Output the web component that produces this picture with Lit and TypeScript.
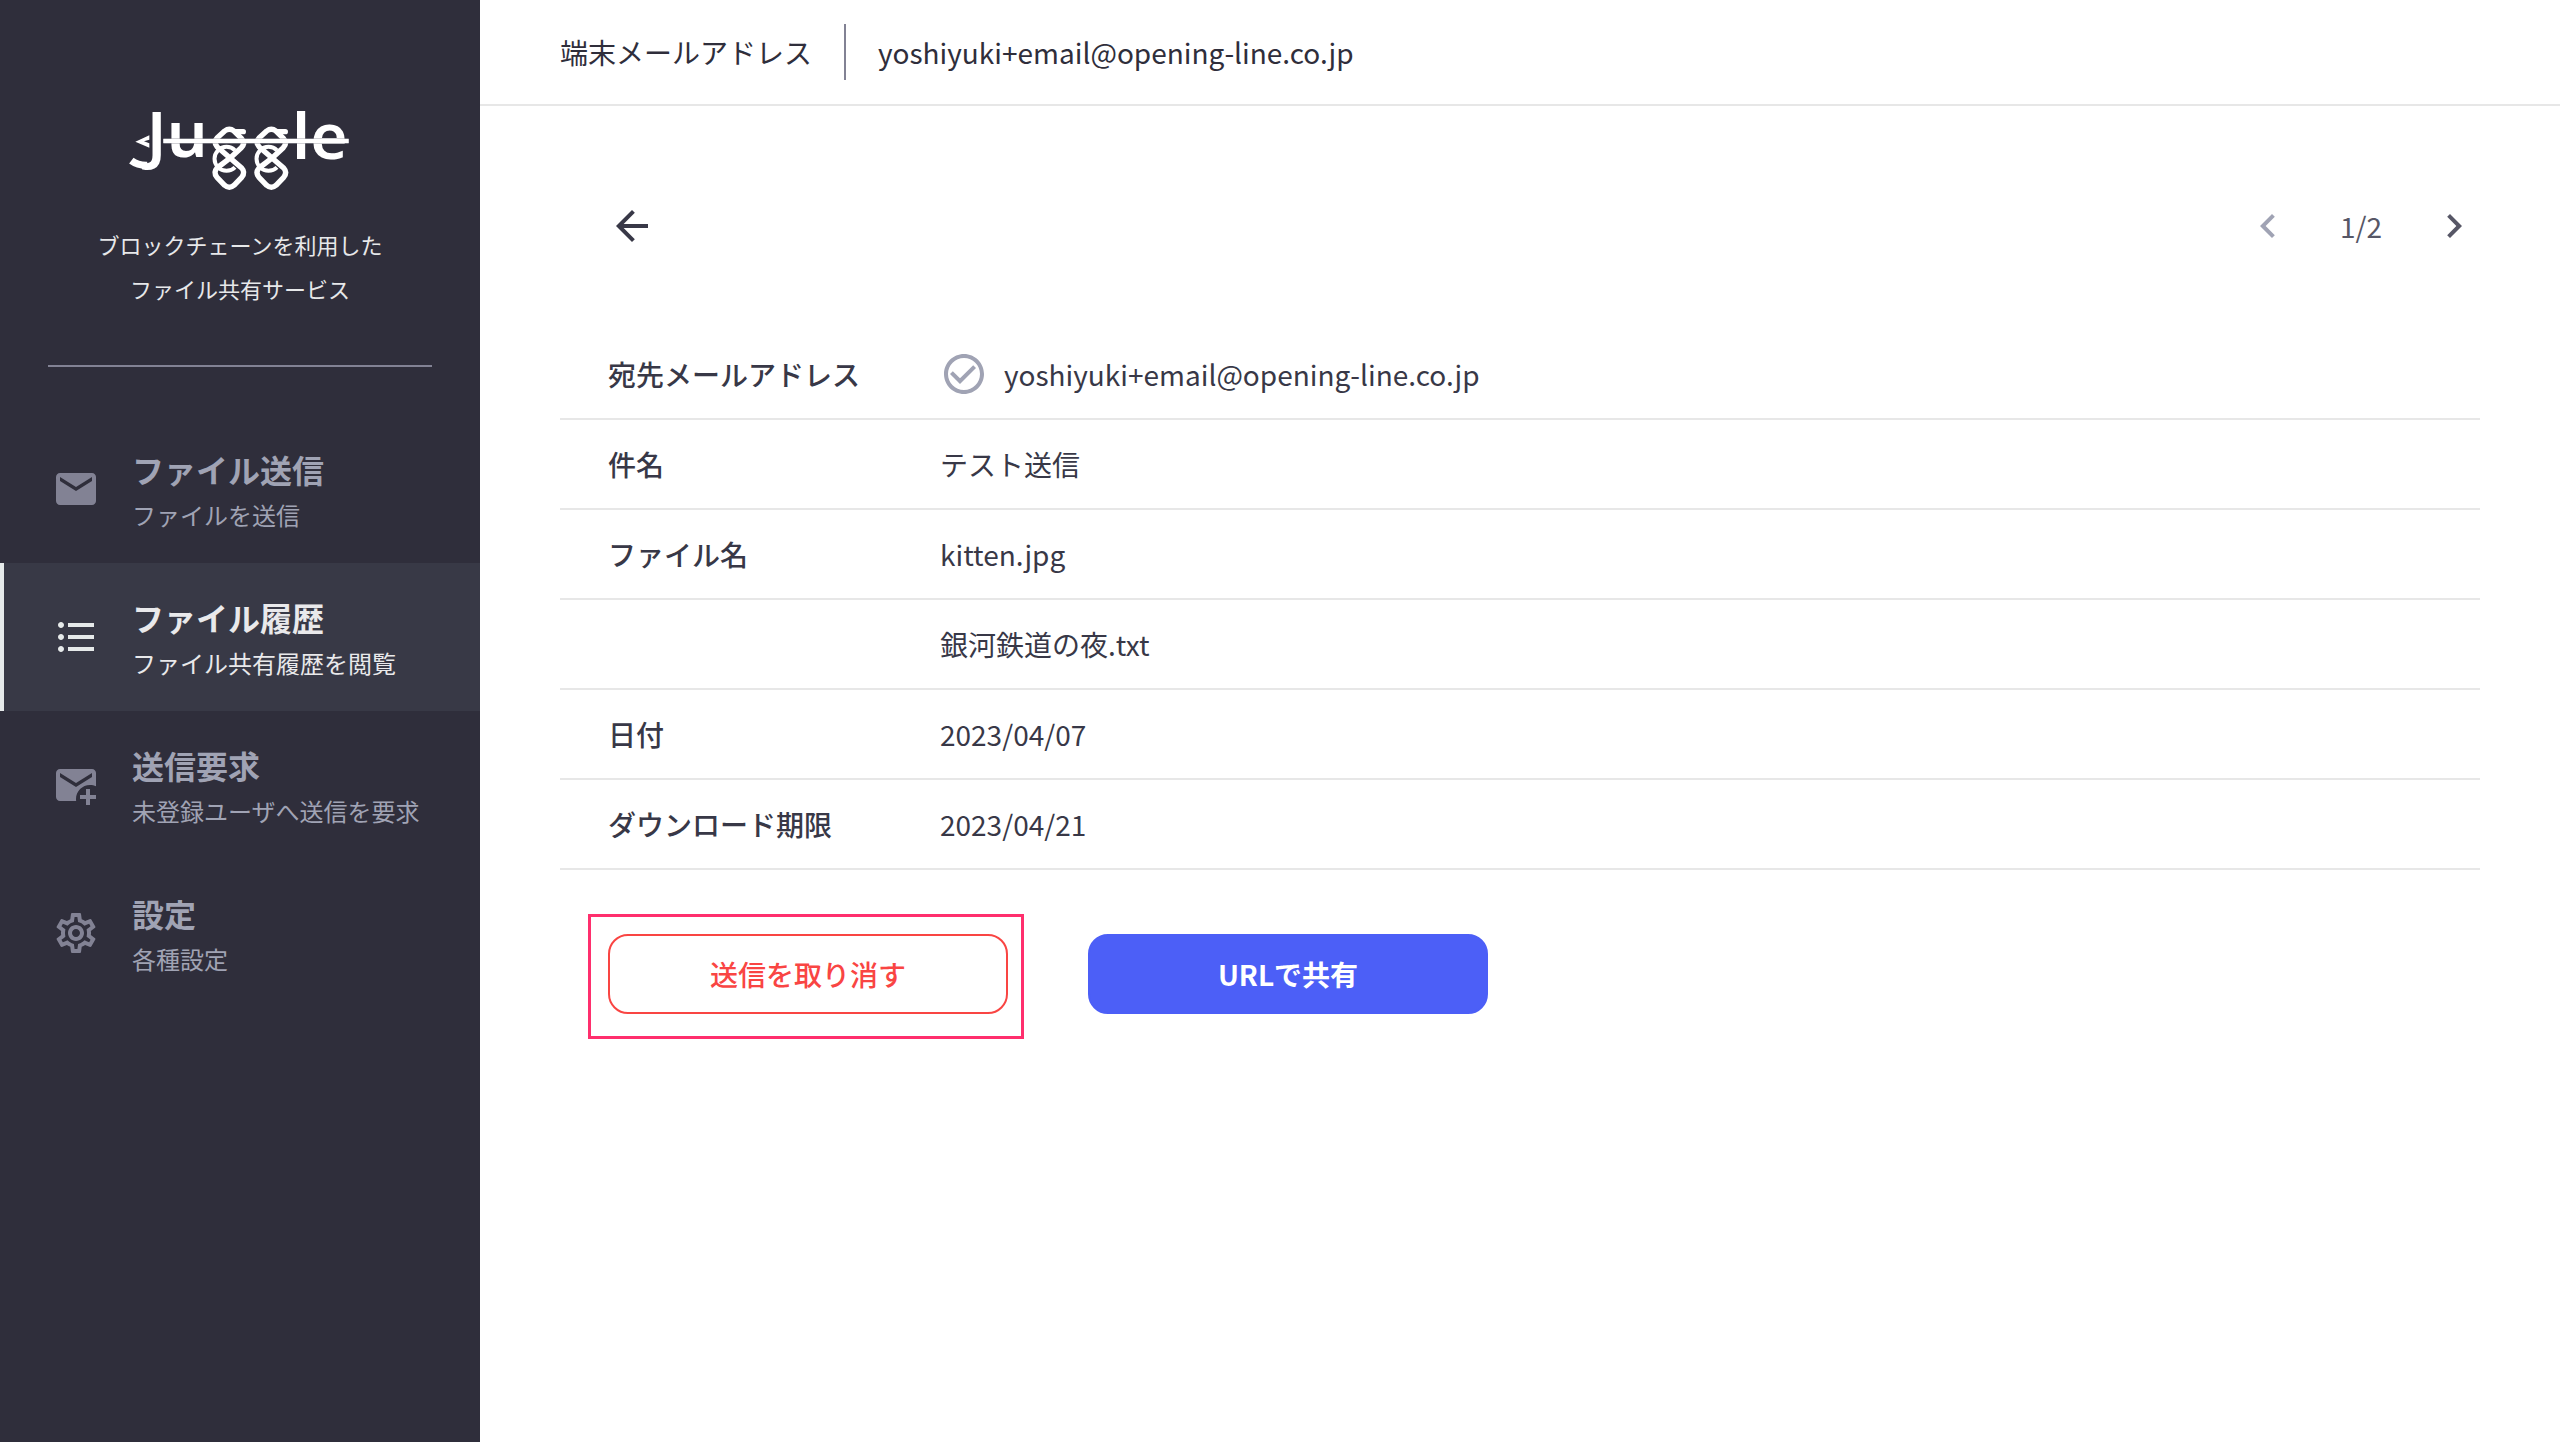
import { LitElement, html, css, svg } from "lit";
import { customElement, state } from "lit/decorators.js";
import { classMap } from "lit/directives/class-map.js";

interface NavItem {
  title: string;
  note: string;
  icon: string;
}

const ICONS: Record<string, string> = {
  mail: "M20 4H4c-1.1 0-1.99.9-1.99 2L2 18c0 1.1.9 2 2 2h16c1.1 0 2-.9 2-2V6c0-1.1-.9-2-2-2zm0 4l-8 5-8-5V6l8 5 8-5v2z",
  list: "M4.500 10.500c-.830 0-1.500.670-1.500 1.500s.670 1.500 1.500 1.500 1.500-.670 1.500-1.500-.670-1.500-1.500-1.500zm0-6c-.830 0-1.500.670-1.500 1.500S3.670 7.500 4.500 7.500 6 6.830 6 6 5.330 4.500 4.500 4.500zm0 12c-.830 0-1.500.680-1.500 1.500s.680 1.500 1.500 1.500 1.500-.680 1.500-1.500-.670-1.500-1.500-1.500zM8 19h13v-2H8v2zm0-6h13v-2H8v2zm0-8v2h13V5H8z",
  invite: "M12 19c0-3.870 3.130-7 7-7 1.080 0 2.090.250 3 .680V6c0-1.100-.900-2-2-2H4c-1.100 0-2 .900-2 2v12c0 1.100.900 2 2 2h8.080c-.050-.330-.080-.660-.080-1zM4 6l8 5 8-5v2l-8 5-8-5V6zM19 14v3h3v2h-3v3h-2v-3h-3v-2h3v-3h2z",
  gear: "M19.430 12.980c.040-.320.070-.640.070-.980 0-.340-.030-.660-.070-.980l2.110-1.650c.190-.150.240-.420.120-.640l-2-3.460c-.090-.160-.260-.250-.440-.250-.060 0-.120.010-.170.030l-2.490 1c-.520-.400-1.080-.730-1.690-.980l-.380-2.650C14.460 2.180 14.250 2 14 2h-4c-.250 0-.460.180-.490.420l-.380 2.650c-.610.250-1.170.590-1.690.980l-2.490-1c-.060-.020-.120-.030-.180-.030-.170 0-.340.090-.430.250l-2 3.460c-.130.220-.070.490.120.640l2.110 1.650c-.040.320-.070.650-.070.980 0 .330.030.660.070.980l-2.110 1.650c-.190.150-.240.420-.120.640l2 3.460c.090.160.260.250.440.250.060 0 .120-.010.170-.030l2.490-1c.520.400 1.080.730 1.690.980l.380 2.650c.030.240.240.420.490.420h4c.250 0 .460-.180.490-.420l.380-2.650c.610-.250 1.170-.590 1.690-.980l2.490 1c.060.020.120.030.180.030.170 0 .340-.090.430-.250l2-3.460c.120-.220.070-.490-.120-.640l-2.110-1.650zm-1.980-1.710c.040.310.050.520.050.730 0 .210-.020.430-.050.730l-.140 1.130.890.700 1.080.840-.700 1.210-1.270-.510-1.040-.420-.900.680c-.430.320-.840.560-1.250.730l-1.060.430-.160 1.130-.200 1.350h-1.400l-.190-1.350-.160-1.130-1.060-.430c-.430-.180-.830-.410-1.230-.710l-.910-.700-1.060.430-1.270.510-.700-1.210 1.080-.840.890-.700-.140-1.130c-.030-.310-.050-.540-.050-.740s.020-.430.050-.730l.140-1.130-.890-.700-1.080-.840.700-1.210 1.270.510 1.040.420.900-.680c.430-.320.840-.560 1.250-.730l1.060-.430.160-1.130.200-1.350h1.390l.190 1.350.160 1.130 1.060.430c.430.180.830.410 1.230.710l.910.700 1.060-.430 1.270-.510.700 1.210-1.070.850-.890.700.140 1.130zM12 8c-2.210 0-4 1.790-4 4s1.790 4 4 4 4-1.790 4-4-1.790-4-4-4zm0 6c-1.100 0-2-.900-2-2s.900-2 2-2 2 .900 2 2-.900 2-2 2z",
  back: "M20 11H7.830l5.590-5.590L12 4l-8 8 8 8 1.410-1.410L7.830 13H20v-2z",
  prev: "M15.410 7.410L14 6l-6 6 6 6 1.410-1.410L10.830 12z",
  next: "M10 6L8.590 7.410 13.170 12l-4.580 4.590L10 18l6-6z",
  check: "M16.590 7.580L10 14.170l-3.590-3.580L5 12l5 5 8-8zM12 2C6.480 2 2 6.480 2 12s4.480 10 10 10 10-4.480 10-10S17.520 2 12 2zm0 18c-4.420 0-8-3.580-8-8s3.580-8 8-8 8 3.580 8 8-3.580 8-8 8z",
};

const icon = (name: string) => html`
  <svg class="icon" viewBox="0 0 24 24" aria-hidden="true"><path d=${ICONS[name]} /></svg>
`;

// One chain link of the logo: two rounded diamonds knotted together with an open ring.
const knot = (x: number) => svg`
  <g transform="translate(${x} 0)" fill="none" stroke="#fff">
    <path stroke-width="16" stroke-linecap="round" d="M20 125H42" />
    <path
      stroke-width="16"
      stroke-linejoin="round"
      d="M0 206L35 174Q49 160 37 146L14 123Q0 112 -14 123L-37 144Q-48 156 -37 170L37 234Q49 247 37 262L14 286Q0 298 -14 286L-37 262Q-49 247 -37 234Z"
    />
    <path stroke-width="12" d="M17 181A36 36 0 1 0 17 232" />
  </g>
`;

@customElement("app-root")
export class AppRoot extends LitElement {
  @state() private active = 1;

  private nav: NavItem[] = [
    { title: "ファイル送信", note: "ファイルを送信", icon: "mail" },
    { title: "ファイル履歴", note: "ファイル共有履歴を閲覧", icon: "list" },
    { title: "送信要求", note: "未登録ユーザへ送信を要求", icon: "invite" },
    { title: "設定", note: "各種設定", icon: "gear" },
  ];

  private rows = [
    { label: "宛先メールアドレス", value: "yoshiyuki+email@opening-line.co.jp", checked: true },
    { label: "件名", value: "テスト送信" },
    { label: "ファイル名", value: "kitten.jpg" },
    { label: "", value: "銀河鉄道の夜.txt" },
    { label: "日付", value: "2023/04/07" },
    { label: "ダウンロード期限", value: "2023/04/21" },
  ];

  static styles = css`
    :host {
      display: flex;
      min-height: 100vh;
      background: #fff;
      color: #383847;
      font-family: "Noto Sans CJK JP", sans-serif;
      font-size: 28px;
      line-height: 40px;
    }
    * { box-sizing: border-box; }
    .icon { display: block; flex: none; width: 48px; height: 48px; fill: currentColor; }
    .side { flex: none; width: 480px; background: #2f2e3b; color: #e7e8ea; }
    .brand { margin: 0 48px; padding: 80px 0 55px; border-bottom: 2px solid #828294; text-align: center; }
    .logo { display: block; width: 260px; height: 130px; margin: 0 auto 12px; overflow: visible; }
    .logo-text { fill: #fff; font-family: "Noto Sans", sans-serif; font-size: 192px; font-weight: 600; }
    .tagline { margin: 0; font-size: 22px; line-height: 44px; }
    .nav { margin-top: 48px; }
    .item {
      display: flex;
      align-items: center;
      gap: 32px;
      height: 148px;
      padding-left: 48px;
      border-left: 4px solid transparent;
      color: #a0a3b4;
      text-decoration: none;
    }
    .item .icon { color: #828294; }
    .item.active { background: #383946; border-color: #e6eaea; color: #e9e9eb; }
    .item.active .icon { color: #e6eaea; }
    .item-text { padding-top: 4px; }
    .item-title { display: block; font-size: 32px; font-weight: 700; line-height: 48px; }
    .item-note { display: block; font-size: 24px; line-height: 44px; }
    .main { flex: 1; min-width: 0; }
    .top {
      display: flex;
      align-items: center;
      height: 106px;
      padding: 0 80px;
      border-bottom: 2px solid #e7e7e7;
      color: #2f2e3b;
    }
    .top-mail { margin-left: 32px; padding: 8px 0 8px 32px; border-left: 2px solid #828294; }
    .body { padding: 96px 80px; }
    .tools { display: flex; align-items: center; justify-content: space-between; padding: 0 2px 0 48px; }
    .icon-button { padding: 0; border: 0; background: none; color: #383847; cursor: pointer; }
    .pager { display: flex; align-items: center; gap: 48px; color: #575766; }
    .pager .icon-button { color: #575766; }
    .pager .icon-button:disabled { color: #a0a3b4; cursor: default; }
    .details { width: 100%; margin-top: 80px; border-collapse: separate; border-spacing: 0; }
    .details th, .details td { height: 90px; padding: 0; border-bottom: 2px solid #e7e7e7; text-align: left; }
    .details th { width: 380px; padding-left: 48px; font-weight: 500; }
    .value { display: flex; align-items: center; gap: 16px; }
    .value .icon { color: #a0a3b4; }
    .actions { display: flex; gap: 80px; padding: 64px 48px; }
    .marked { position: relative; }
    .marked::after {
      content: "";
      position: absolute;
      inset: -20px -16px -25px -20px;
      border: 3px solid #ff2f6d;
      pointer-events: none;
    }
    .button {
      display: block;
      width: 400px;
      height: 80px;
      border: 2px solid #4c5ff7;
      border-radius: 20px;
      background: #4c5ff7;
      color: #fff;
      font: inherit;
      font-weight: 700;
      cursor: pointer;
    }
    .button.cancel { border-color: #f94543; background: #fff; color: #f94543; font-weight: 500; }
  `;

  private renderLogo() {
    return html`
      <svg class="logo" viewBox="0 -30 780 390" role="img" aria-label="Juggle">
        <g class="logo-text">
          <text x="110" y="200">J</text>
          <text x="170" y="202">u</text>
          <text x="546" y="206">l</text>
          <text x="601" y="206">e</text>
        </g>
        ${knot(358)} ${knot(484)}
        <path d="M64 212Q84 227 112 226" fill="none" stroke="#fff" stroke-width="22" />
        <path d="M160 153H716" stroke="#a3a3ab" stroke-width="15" />
        <path d="M160 153H716" stroke="#fff" stroke-width="12" />
        <path d="M76 155L118 136V149L102 154L118 160V173Z" fill="#fff" />
      </svg>
    `;
  }

  render() {
    return html`
      <aside class="side">
        <div class="brand">
          ${this.renderLogo()}
          <p class="tagline">ブロックチェーンを利用した<br />ファイル共有サービス</p>
        </div>
        <nav class="nav">
          ${this.nav.map(
            (n, i) => html`
              <a
                href="#"
                class=${classMap({ item: true, active: i === this.active })}
                @click=${(e: Event) => { e.preventDefault(); this.active = i; }}
              >
                ${icon(n.icon)}
                <span class="item-text"><span class="item-title">${n.title}</span><span class="item-note">${n.note}</span></span>
              </a>
            `
          )}
        </nav>
      </aside>
      <main class="main">
        <header class="top">
          <span>端末メールアドレス</span>
          <span class="top-mail">yoshiyuki+email@opening-line.co.jp</span>
        </header>
        <div class="body">
          <div class="tools">
            <button class="icon-button" aria-label="戻る">${icon("back")}</button>
            <div class="pager">
              <button class="icon-button" aria-label="前へ" disabled>${icon("prev")}</button>
              <span>1/2</span>
              <button class="icon-button" aria-label="次へ">${icon("next")}</button>
            </div>
          </div>
          <table class="details">
            ${this.rows.map(
              (r) => html`
                <tr>
                  <th scope="row">${r.label}</th>
                  <td><div class="value">${r.checked ? icon("check") : ""}<span>${r.value}</span></div></td>
                </tr>
              `
            )}
          </table>
          <div class="actions">
            <div class="marked"><button class="button cancel">送信を取り消す</button></div>
            <button class="button">URLで共有</button>
          </div>
        </div>
      </main>
    `;
  }
}
